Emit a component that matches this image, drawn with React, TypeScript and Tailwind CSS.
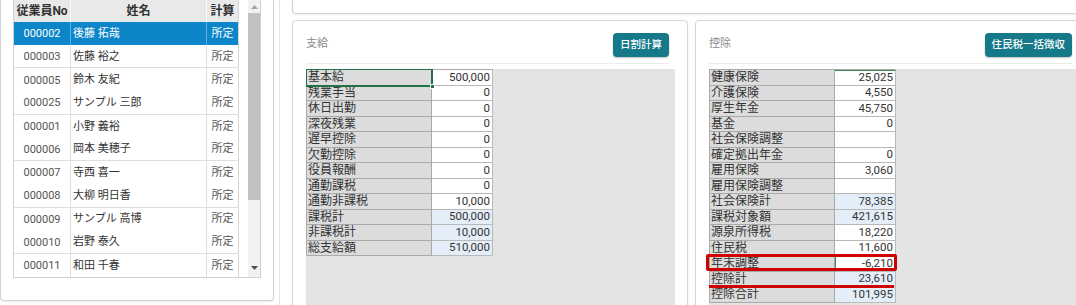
import React from "react";

const employees = [
  { no: "000002", name: "後藤 拓哉", calc: "所定" },
  { no: "000003", name: "佐藤 裕之", calc: "所定" },
  { no: "000005", name: "鈴木 友紀", calc: "所定" },
  { no: "000025", name: "サンプル 三郎", calc: "所定" },
  { no: "000001", name: "小野 義裕", calc: "所定" },
  { no: "000006", name: "岡本 美穂子", calc: "所定" },
  { no: "000007", name: "寺西 喜一", calc: "所定" },
  { no: "000008", name: "大柳 明日香", calc: "所定" },
  { no: "000009", name: "サンプル 高博", calc: "所定" },
  { no: "000010", name: "岩野 泰久", calc: "所定" },
  { no: "000011", name: "和田 千春", calc: "所定" },
];

type Item = { label: string; value: string; total?: boolean };

const payments: Item[] = [
  { label: "基本給", value: "500,000" },
  { label: "残業手当", value: "0" },
  { label: "休日出勤", value: "0" },
  { label: "深夜残業", value: "0" },
  { label: "遅早控除", value: "0" },
  { label: "欠勤控除", value: "0" },
  { label: "役員報酬", value: "0" },
  { label: "通勤課税", value: "0" },
  { label: "通勤非課税", value: "10,000" },
  { label: "課税計", value: "500,000", total: true },
  { label: "非課税計", value: "10,000", total: true },
  { label: "総支給額", value: "510,000", total: true },
];

const deductions: Item[] = [
  { label: "健康保険", value: "25,025" },
  { label: "介護保険", value: "4,550" },
  { label: "厚生年金", value: "45,750" },
  { label: "基金", value: "0" },
  { label: "社会保険調整", value: "" },
  { label: "確定拠出年金", value: "0" },
  { label: "雇用保険", value: "3,060" },
  { label: "雇用保険調整", value: "" },
  { label: "社会保険計", value: "78,385", total: true },
  { label: "課税対象額", value: "421,615", total: true },
  { label: "源泉所得税", value: "18,220" },
  { label: "住民税", value: "11,600" },
  { label: "年末調整", value: "-6,210" },
  { label: "控除計", value: "23,610", total: true },
  { label: "控除合計", value: "101,995", total: true },
];

function EmployeeList() {
  return (
    <div className="w-[274px] h-[301px] shrink-0 border border-t-0 border-[#d2d2d2] rounded-b-[4px] shadow-[0_1px_2px_rgba(0,0,0,0.08)] pl-[12px]">
      <div className="flex w-[248px] h-[278px] border border-t-0 border-[#d0d0d0]">
        <div className="w-[225px] text-[#555]">
          <div className="flex h-[22px] bg-[#e9e9e9] text-[12px] font-bold text-[#333]">
            <div className="w-[57px] border-r border-[#f7f7f7] flex items-center justify-center">従業員No</div>
            <div className="w-[136px] border-r border-[#f7f7f7] flex items-center justify-center">姓名</div>
            <div className="w-[32px] border-r border-[#d6d6d6] flex items-center justify-center">計算</div>
          </div>
          {employees.map((e, i) => {
            const selected = i === 0;
            return (
              <div
                key={e.no}
                className={`flex h-[23.2px] text-[11px] ${
                  selected ? "bg-[#0c86c9] text-white" : ""
                } ${i % 2 === 1 ? "border-b border-[#dedede]" : ""}`}
              >
                <div
                  className={`w-[57px] border-r flex items-center justify-center pt-[2px] ${
                    selected ? "border-[#5fb0df]" : "border-[#dedede]"
                  }`}
                >
                  {e.no}
                </div>
                <div
                  className={`w-[136px] border-r flex items-center pl-[2px] pt-[1px] ${
                    selected ? "border-[#5fb0df] text-white" : "border-[#dedede] text-[#333]"
                  }`}
                >
                  {e.name}
                </div>
                <div
                  className={`w-[32px] border-r flex items-center justify-center pt-[1px] ${
                    selected ? "border-[#d6d6d6]" : "border-[#d6d6d6]"
                  }`}
                >
                  {e.calc}
                </div>
              </div>
            );
          })}
        </div>
        <div className="w-[9px]" />
        <div className="w-[12px] h-full bg-[#f1f1f1] flex flex-col items-center">
          <div className="h-[13px] flex items-center justify-center">
            <svg width="7" height="4" viewBox="0 0 7 4">
              <path d="M0 4 L3.5 0 L7 4 Z" fill="#a3a3a3" />
            </svg>
          </div>
          <div className="w-full h-[187px] bg-[#c1c1c1]" />
          <div className="flex-1 flex items-end justify-center pb-[7px]">
            <svg width="7" height="4" viewBox="0 0 7 4">
              <path d="M0 0 L7 0 L3.5 4 Z" fill="#505050" />
            </svg>
          </div>
        </div>
      </div>
    </div>
  );
}

function Sheet({
  items,
  selectLabel,
  children,
}: {
  items: Item[];
  selectLabel?: boolean;
  children?: React.ReactNode;
}) {
  return (
    <div className="relative w-[187px] border-t border-l border-[#a9a9a9]">
      {items.map((it, i) => (
        <div key={it.label} className="flex h-[15.5px]">
          <div className="w-[125px] bg-[#dcdcdc] border-r border-b border-[#a9a9a9] pl-[1px] flex items-center text-[12px] leading-none text-[#333]">
            {it.label}
          </div>
          <div
            className={`w-[61px] border-r border-b border-[#b9b9b9] pr-[2px] flex items-center justify-end text-[11.5px] leading-none text-[#333] ${
              it.total ? "bg-[#e4eef9]" : "bg-white"
            } ${it.label === "年末調整" ? "border-l border-l-[#3f8a5c]" : ""} ${
              i === 0 && !selectLabel ? "shadow-[inset_0_1px_0_#3f8a5c]" : ""
            }`}
          >
            {it.value}
          </div>
        </div>
      ))}
      {selectLabel && (
        <div className="absolute left-[-1px] top-[-1px] w-[127px] h-[18px] border border-r-2 border-b-2 border-[#217346]">
          <div className="absolute right-[-4px] bottom-[-4px] w-[5px] h-[5px] bg-[#217346] border border-white" />
        </div>
      )}
      {children}
    </div>
  );
}

function Card({
  title,
  button,
  children,
}: {
  title: string;
  button: string;
  children: React.ReactNode;
}) {
  return (
    <div className="w-[396px] h-[300px] shrink-0 border border-[#d6d6d6] rounded-[4px] shadow-[0_1px_2px_rgba(0,0,0,0.08)] pt-[12px] pl-[13px] pr-[18px] flex flex-col">
      <div className="flex items-start justify-between h-[24px]">
        <span className="mt-[3px] text-[11px] text-[#8a8a8a]">{title}</span>
        <button className="h-[24px] px-[7px] rounded-[4px] bg-[#15798a] text-white text-[10.5px] font-medium shadow-[0_1px_2px_rgba(0,0,0,0.25)]">
          {button}
        </button>
      </div>
      <div className="mt-[6px] h-px bg-[#ececec]" />
      <div className="mt-[5px] mr-[-6px] flex-1 bg-[#e4e4e4]">{children}</div>
    </div>
  );
}

export default function App() {
  return (
    <div className="w-[1076px] h-[305px] overflow-hidden bg-white flex font-['Roboto','Noto_Sans_CJK_JP',sans-serif]">
      <EmployeeList />
      <div className="w-[18px] shrink-0">
        <div className="ml-[5px] w-px h-full bg-[#e2e2e2]" />
      </div>
      <div className="w-[800px] shrink-0">
        <div className="h-[14px] border border-t-0 border-[#d2d2d2] rounded-b-[4px] shadow-[0_1px_2px_rgba(0,0,0,0.08)]" />
        <div className="mt-[6px] flex gap-[7px]">
          <Card title="支給" button="日割計算">
            <Sheet items={payments} selectLabel />
          </Card>
          <Card title="控除" button="住民税一括徴収">
            <Sheet items={deductions}>
              <div className="absolute left-[-4px] top-[184px] w-[191px] h-[17px] border-[3px] border-[#d00000] rounded-[2px]" />
              <div className="absolute left-[-1px] top-[215px] w-[185px] h-[3px] bg-[#d00000]" />
            </Sheet>
          </Card>
        </div>
      </div>
    </div>
  );
}
